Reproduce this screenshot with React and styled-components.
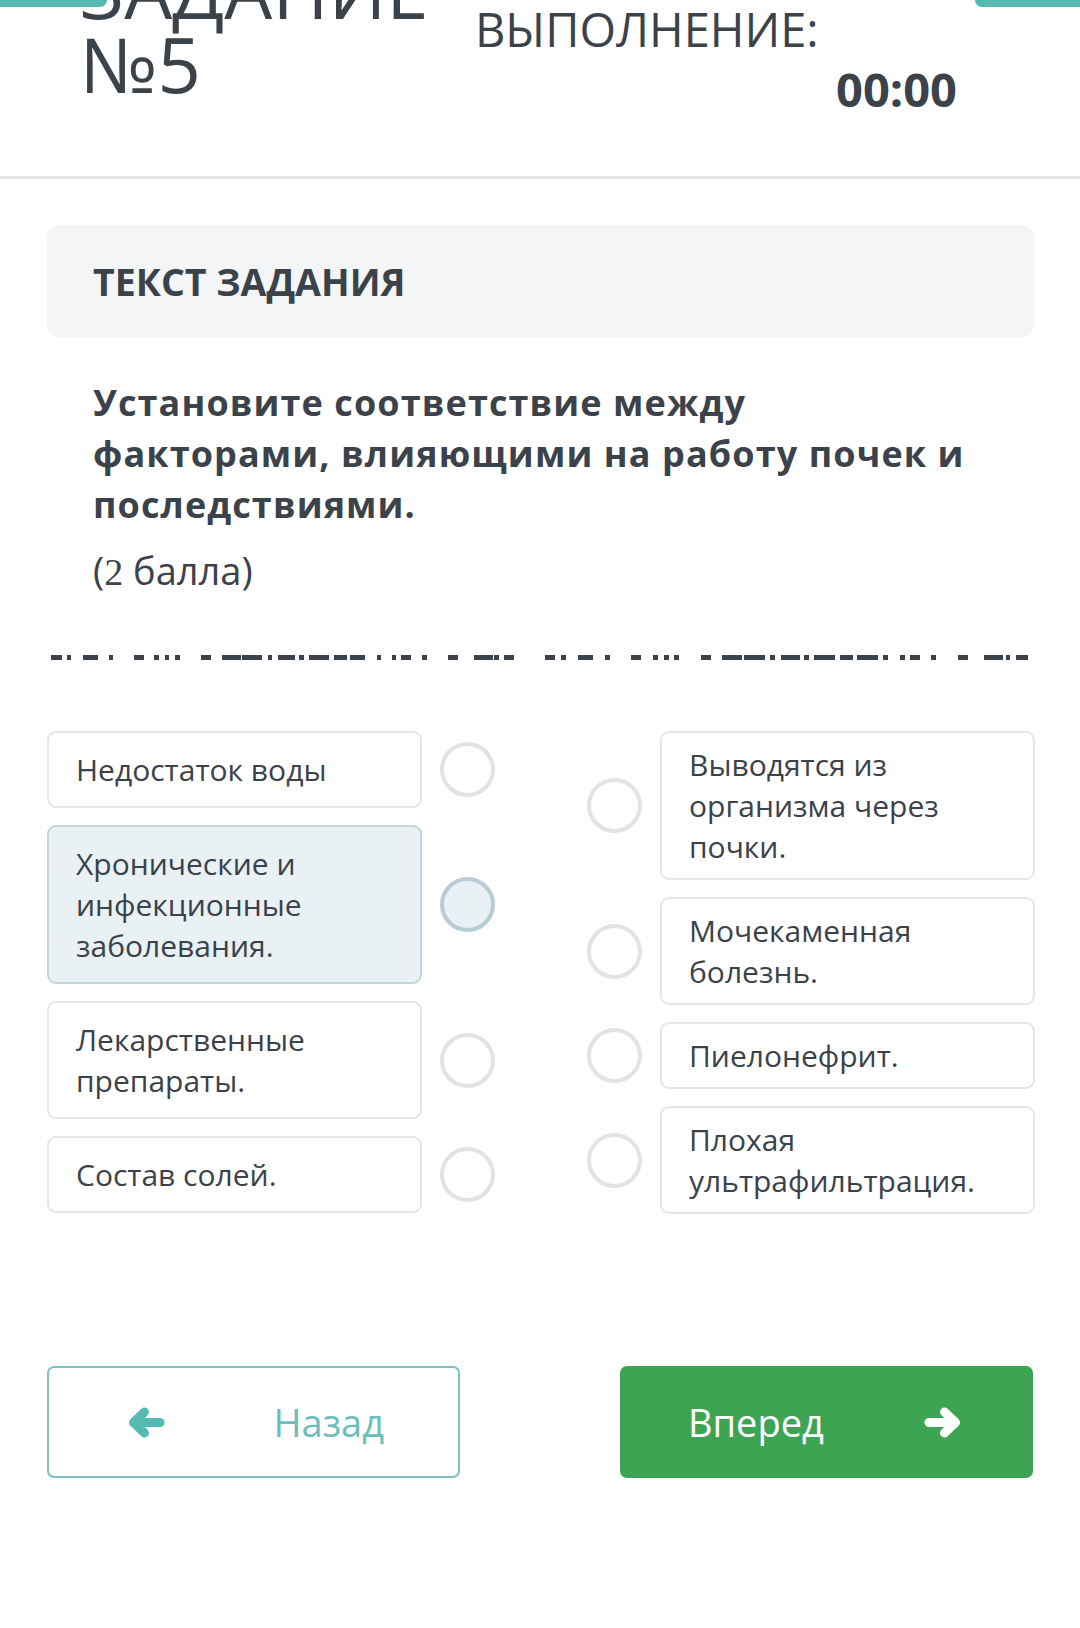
import React from "react";
import styled, { createGlobalStyle } from "styled-components";

const Global = createGlobalStyle`
  html, body { margin: 0; padding: 0; background: #ffffff; }
  body { font-family: "Open Sans", "Noto Sans", sans-serif; color: #3b4249; }
  * { box-sizing: border-box; }
`;

const Page = styled.div`
  position: relative;
  width: 1080px;
  min-height: 1628px;
  background: #fff;
  overflow: hidden;
`;

const TopTab = styled.div`
  position: absolute;
  top: 0;
  ${(p) => (p.$side === "left" ? "left: 0;" : "right: 0;")}
  width: ${(p) => (p.$side === "left" ? 107 : 105)}px;
  height: 7px;
  background: #56b9b2;
  border-radius: ${(p) => (p.$side === "left" ? "0 0 8px 0" : "0 0 0 8px")};
  z-index: 2;
`;

const Header = styled.header`
  height: 179px;
  border-bottom: 3px solid #e4e4e4;
  display: flex;
  justify-content: space-between;
  align-items: flex-start;
  padding: 0 123px 0 80px;
  overflow: hidden;
`;

const Title = styled.h1`
  margin: -47px 0 0;
  font-size: 76px;
  line-height: 74px;
  font-weight: 400;
  color: #3b4249;
`;

const TimerBlock = styled.div`
  width: 482px;
  display: flex;
  flex-direction: column;
  align-items: flex-start;
`;

const TimerLabel = styled.div`
  margin-top: -52px;
  font-size: 47px;
  line-height: 54px;
  font-weight: 400;
  color: #3b4249;
`;

const TimerValue = styled.div`
  align-self: flex-end;
  margin-top: 3px;
  font-size: 47px;
  line-height: 60px;
  font-weight: 700;
  color: #3b4249;
`;

const Content = styled.main`
  padding: 0 46px 0 47px;
`;

const TaskHead = styled.div`
  margin-top: 46px;
  height: 112px;
  background: #f3f5f7;
  border-radius: 12px;
  display: flex;
  align-items: center;
  padding-left: 46px;
  font-size: 37.5px;
  font-weight: 700;
  color: #3b4249;
`;

const Question = styled.p`
  margin: 40px 0 0;
  padding-left: 46px;
  font-size: 36px;
  line-height: 51px;
  letter-spacing: 1.1px;
  font-weight: 700;
  color: #3b4249;
  white-space: nowrap;
`;

const Points = styled.p`
  margin: 15px 0 0;
  padding-left: 46px;
  font-size: 38px;
  line-height: 50px;
  font-weight: 400;
  color: #3b4249;
`;

const SerifDigit = styled.span`
  font-family: "Liberation Serif", "DejaVu Serif", serif;
`;

const DashSvg = styled.svg`
  display: block;
  margin-top: 58px;
`;

const Matching = styled.div`
  margin-top: 70px;
  display: flex;
  gap: 92px;
`;

const Column = styled.div`
  width: 448px;
  display: flex;
  flex-direction: column;
  gap: 17px;
`;

const Row = styled.div`
  display: flex;
  align-items: center;
  gap: 18px;
`;

const Card = styled.div`
  width: 375px;
  padding: ${(p) => p.$pad}px 18px ${(p) => p.$pad}px 27px;
  font-size: 30px;
  line-height: 41px;
  color: #3b4249;
  background: ${(p) => (p.$active ? "#e9f1f5" : "#ffffff")};
  border: 2px solid ${(p) => (p.$active ? "#c3d5dd" : "#e4e7ea")};
  border-radius: 9px;
`;

const Dot = styled.div`
  flex: none;
  width: 55px;
  height: 55px;
  border-radius: 50%;
  border: 4px solid ${(p) => (p.$active ? "#b8ccd5" : "#e0e4e7")};
  background: ${(p) => (p.$active ? "#e9f1f5" : "#ffffff")};
`;

const Nav = styled.div`
  margin-top: 152px;
  display: flex;
  justify-content: space-between;
  padding-right: 1px;
`;

const NavButton = styled.button`
  width: 413px;
  height: 112px;
  display: flex;
  align-items: center;
  justify-content: space-between;
  padding: ${(p) => (p.$primary ? "0 70px 0 66px" : "0 74px 0 79px")};
  font-family: "Open Sans", sans-serif;
  font-size: 38px;
  font-weight: 400;
  border-radius: 7px;
  cursor: pointer;
  color: ${(p) => (p.$primary ? "#ffffff" : "#6bbebb")};
  background: ${(p) => (p.$primary ? "#3da453" : "#ffffff")};
  border: 2px solid ${(p) => (p.$primary ? "#3da453" : "#7cc2c2")};
`;

const ArrowIcon = ({ dir, color }) => (
  <svg width="37" height="31" viewBox="0 0 37 31" aria-hidden="true">
    <g
      transform={dir === "left" ? undefined : "translate(37 0) scale(-1 1)"}
      fill="none"
      stroke={color}
      strokeWidth="9"
      strokeLinecap="round"
      strokeLinejoin="round"
    >
      <polyline points="16.5,5 5.5,15.5 16.5,26" />
      <line x1="6" y1="15.5" x2="32" y2="15.5" />
    </g>
  </svg>
);

const DASHES = [
  [51, 62], [67, 71], [83, 98], [109, 113], [134, 144], [154, 159], [165, 169], [175, 180],
  [201, 211], [222, 241], [242, 262], [268, 272], [278, 295], [299, 304], [309, 329],
  [334, 347], [350, 365], [377, 381], [392, 396], [401, 411], [422, 427], [448, 458],
  [474, 493], [494, 499], [504, 514],
  [545, 555], [561, 566], [578, 593], [605, 610], [631, 641], [653, 658], [664, 669],
  [674, 679], [701, 711], [722, 742], [744, 765], [770, 775], [781, 800], [804, 809],
  [814, 835], [840, 853], [857, 878], [883, 888], [900, 905], [910, 920], [931, 936],
  [958, 968], [984, 1003], [1006, 1010], [1016, 1028],
];

const DashStrip = () => (
  <DashSvg width="988" height="6" viewBox="0 0 988 6" aria-hidden="true">
    {DASHES.map(([a, b], i) => (
      <rect key={i} x={a - 47} y="0" width={b - a} height="5" fill="#3b4249" />
    ))}
  </DashSvg>
);

const LEFT = [
  { text: "Недостаток воды" },
  { text: "Хронические и инфекционные заболевания.", active: true },
  { text: "Лекарственные препараты." },
  { text: "Состав солей." },
];

const RIGHT = [
  "Выводятся из организма через почки.",
  "Мочекаменная болезнь.",
  "Пиелонефрит.",
  "Плохая ультрафильтрация.",
];

export default function App() {
  return (
    <Page>
      <Global />
      <TopTab $side="left" />
      <TopTab $side="right" />
      <Header>
        <Title>
          ЗАДАНИЕ
          <br />
          №5
        </Title>
        <TimerBlock>
          <TimerLabel>
            ВРЕМЯ НА
            <br />
            ВЫПОЛНЕНИЕ:
          </TimerLabel>
          <TimerValue>00:00</TimerValue>
        </TimerBlock>
      </Header>
      <Content>
        <TaskHead>ТЕКСТ ЗАДАНИЯ</TaskHead>
        <Question>
          Установите соответствие между
          <br />
          факторами, влияющими на работу почек и
          <br />
          последствиями.
        </Question>
        <Points>
          (<SerifDigit>2</SerifDigit> балла)
        </Points>
        <DashStrip />
        <Matching>
          <Column>
            {LEFT.map((item) => (
              <Row key={item.text}>
                <Card $pad={16} $active={item.active}>
                  {item.text}
                </Card>
                <Dot $active={item.active} />
              </Row>
            ))}
          </Column>
          <Column>
            {RIGHT.map((t) => (
              <Row key={t}>
                <Dot />
                <Card $pad={11}>{t}</Card>
              </Row>
            ))}
          </Column>
        </Matching>
        <Nav>
          <NavButton>
            <ArrowIcon dir="left" color="#56b9b2" />
            Назад
          </NavButton>
          <NavButton $primary>
            Вперед
            <ArrowIcon dir="right" color="#ffffff" />
          </NavButton>
        </Nav>
      </Content>
    </Page>
  );
}
